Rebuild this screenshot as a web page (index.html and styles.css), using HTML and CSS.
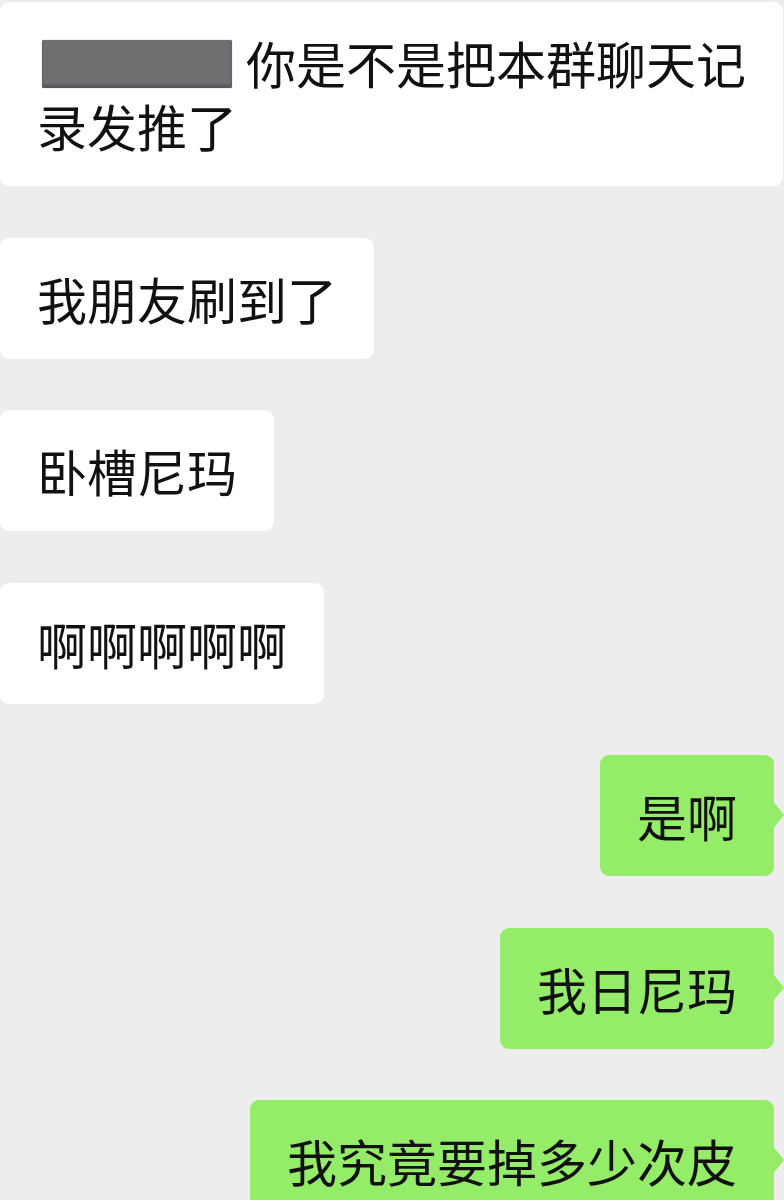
FILE: index.html
```html
<!DOCTYPE html>
<html lang="zh-CN">
<head>
<meta charset="utf-8">
<link rel="stylesheet" href="styles.css">
</head>
<body>
<div class="chat">
  <div class="bubble left wide"><span class="redact"></span>你是不是把本群聊天记录发推了</div>
  <div class="bubble left">我朋友刷到了</div>
  <div class="bubble left">卧槽尼玛</div>
  <div class="bubble left">啊啊啊啊啊</div>
  <div class="bubble right">是啊</div>
  <div class="bubble right">我日尼玛</div>
  <div class="bubble right">我究竟要掉多少次皮</div>
</div>
</body>
</html>
```
FILE: styles.css
```css
html, body {
  margin: 0;
  padding: 0;
  background: #ededed;
  height: 1200px;
  overflow: hidden;
}
.chat {
  display: flex;
  flex-direction: column;
  gap: 51.5px;
  padding-top: 2px;
  font-family: "Noto Sans CJK SC", "Noto Sans", sans-serif;
}
.bubble {
  position: relative;
  font-size: 50px;
  line-height: 63px;
  color: #111;
  padding: 29px 37px;
  border-radius: 9px;
  box-sizing: border-box;
}
.left {
  align-self: flex-start;
  background: #ffffff;
}
.wide {
  width: 783px;
}
.right {
  align-self: flex-end;
  margin-right: 10px;
  background: #95ec69;
}
.right::after {
  content: "";
  position: absolute;
  right: -10px;
  top: 44px;
  width: 11px;
  height: 32px;
  background: #95ec69;
  clip-path: polygon(0 0, 10% 12%, 90% 45%, 100% 50%, 90% 55%, 10% 88%, 0 100%);
}
.redact {
  display: inline-block;
  vertical-align: top;
  width: 190px;
  height: 48px;
  margin-top: 9px;
  margin-left: 5px;
  margin-right: 14px;
  background: #6f6f72;
  border-radius: 2px;
  box-shadow: inset 0 -3px 3px #55555c, 0 0 1px #6f6f72;
}
```
